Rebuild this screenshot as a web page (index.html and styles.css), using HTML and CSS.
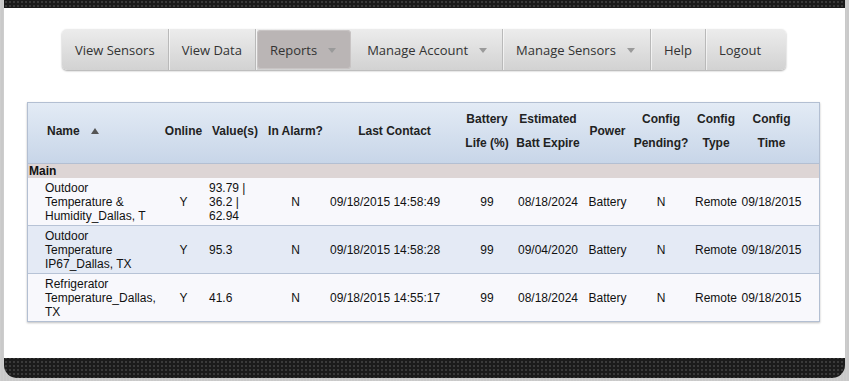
FILE: index.html
```html
<!DOCTYPE html>
<html lang="en">
<head>
    <meta charset="UTF-8">
    <title>Sensors - Reports</title>
    <link rel="stylesheet" href="styles.css">
</head>
<body>
    <div class="frame">
        <div class="page">
            <!-- Menu principal -->
            <div class="nav-wrap">
                <ul class="nav">
                    <li>View Sensors</li>
                    <li>View Data</li>
                    <li class="active">Reports <span class="caret"></span></li>
                    <li>Manage Account <span class="caret"></span></li>
                    <li>Manage Sensors <span class="caret"></span></li>
                    <li>Help</li>
                    <li class="last">Logout</li>
                </ul>
            </div>

            <!-- Tabla de sensores -->
            <div class="grid">
                <table>
                    <colgroup>
                        <col style="width:134px">
                        <col style="width:43px">
                        <col style="width:60px">
                        <col style="width:61px">
                        <col style="width:137px">
                        <col style="width:48px">
                        <col style="width:74px">
                        <col style="width:45px">
                        <col style="width:62px">
                        <col style="width:48px">
                        <col>
                    </colgroup>
                    <thead>
                        <tr>
                            <th class="name">Name <span class="sort"></span></th>
                            <th>Online</th>
                            <th>Value(s)</th>
                            <th>In Alarm?</th>
                            <th>Last Contact</th>
                            <th>Battery<br>Life (%)</th>
                            <th>Estimated<br>Batt Expire</th>
                            <th>Power</th>
                            <th>Config<br>Pending?</th>
                            <th>Config<br>Type</th>
                            <th class="time">Config<br>Time</th>
                        </tr>
                    </thead>
                    <tbody>
                        <tr class="group">
                            <td colspan="11">Main</td>
                        </tr>
                        <tr class="odd">
                            <td class="name">Outdoor<br>Temperature &amp;<br>Humidity_Dallas, T</td>
                            <td class="c">Y</td>
                            <td class="l">93.79 |<br>36.2 |<br>62.94</td>
                            <td class="c">N</td>
                            <td class="l">09/18/2015 14:58:49</td>
                            <td class="c">99</td>
                            <td class="c">08/18/2024</td>
                            <td class="c">Battery</td>
                            <td class="c">N</td>
                            <td class="c">Remote</td>
                            <td class="time">09/18/2015</td>
                        </tr>
                        <tr class="even">
                            <td class="name">Outdoor<br>Temperature<br>IP67_Dallas, TX</td>
                            <td class="c">Y</td>
                            <td class="l">95.3</td>
                            <td class="c">N</td>
                            <td class="l">09/18/2015 14:58:28</td>
                            <td class="c">99</td>
                            <td class="c">09/04/2020</td>
                            <td class="c">Battery</td>
                            <td class="c">N</td>
                            <td class="c">Remote</td>
                            <td class="time">09/18/2015</td>
                        </tr>
                        <tr class="odd last-row">
                            <td class="name">Refrigerator<br>Temperature_Dallas,<br>TX</td>
                            <td class="c">Y</td>
                            <td class="l">41.6</td>
                            <td class="c">N</td>
                            <td class="l">09/18/2015 14:55:17</td>
                            <td class="c">99</td>
                            <td class="c">08/18/2024</td>
                            <td class="c">Battery</td>
                            <td class="c">N</td>
                            <td class="c">Remote</td>
                            <td class="time">09/18/2015</td>
                        </tr>
                    </tbody>
                </table>
            </div>
        </div>
    </div>
</body>
</html>
```

FILE: styles.css
```css
/* Estilos generales */
html, body {
    margin: 0;
    padding: 0;
}
body {
    background-color: #c9c9c9;
    background-image: repeating-linear-gradient(90deg, rgba(255,255,255,0.08) 0 1px, transparent 1px 3px);
    height: 381px;
    overflow: hidden;
}
.frame {
    margin: 0 4px;
    padding: 8px 0 20px 0;
    background-color: #1b1b1b;
    background-image: radial-gradient(circle, #3a3a3a 0.9px, transparent 1.3px);
    background-size: 4px 4px;
    border-radius: 0 0 13px 13px;
}
.page {
    background-color: #ffffff;
    height: 350px;
    padding-top: 21px;
    box-sizing: border-box;
}

/* Menu */
.nav-wrap {
    text-align: center;
}
.nav {
    display: inline-flex;
    list-style: none;
    margin: 0 0 0 -1px;
    padding: 0 12px 0 0;
    height: 41px;
    border-radius: 5px;
    background: linear-gradient(#ececec, #d2d2d2);
    box-shadow: 0 1px 2px rgba(0, 0, 0, 0.35);
    font-family: "Open Sans", sans-serif;
    font-size: 13px;
    color: #333333;
}
.nav li {
    display: flex;
    align-items: center;
    padding: 0 13px;
    border-right: 1px solid #b9b9b9;
    box-shadow: 1px 0 0 rgba(255, 255, 255, 0.6);
}
.nav li.last {
    border-right: none;
    box-shadow: none;
}
.nav li.active {
    background: #bab5b5;
    border-radius: 4px;
    margin: 1px 3px 1px 1px;
    box-shadow: inset 0 0 0 1px #c8c4c4;
    border-right: none;
}
.caret {
    display: inline-block;
    width: 0;
    height: 0;
    margin: 1px 2px 0 11px;
    border-left: 4px solid transparent;
    border-right: 4px solid transparent;
    border-top: 5px solid #9a9a9a;
}

/* Tabla */
.grid {
    margin: 32px 25px 0 23px;
    border: 1px solid #b3bfd2;
    box-shadow: 0 1px 2px rgba(0, 0, 0, 0.25);
}
table {
    width: 100%;
    border-collapse: collapse;
    table-layout: fixed;
    font-family: "Liberation Sans", Arial, sans-serif;
    font-size: 12px;
    color: #111111;
}
thead tr {
    background: linear-gradient(#e3ebf5, #c7d5e8);
}
th {
    font-weight: bold;
    color: #222222;
    line-height: 24px;
    padding: 4px 0 8px 0;
    text-align: center;
    vertical-align: middle;
    white-space: nowrap;
    border-bottom: 1px solid #b3bfd2;
}
th.name {
    text-align: left;
    padding-left: 19px;
}
th.time, td.time {
    padding-right: 16px;
}
.sort {
    display: inline-block;
    width: 0;
    height: 0;
    margin-left: 8px;
    vertical-align: 1px;
    border-left: 4px solid transparent;
    border-right: 4px solid transparent;
    border-bottom: 6px solid #555555;
}
tr.group td {
    background-color: #ddd5d5;
    font-weight: bold;
    line-height: 14px;
    padding: 0 1px;
}
td {
    line-height: 14px;
    padding: 3px 0 2px 0;
    vertical-align: middle;
    white-space: nowrap;
}
tr.odd td {
    background-color: #f8f8fc;
    height: 42px;
}
tr.last-row td {
    height: 41px;
}
tr.even td {
    background-color: #e4eaf5;
    height: 40px;
    border-top: 1px solid #b7c3d6;
    border-bottom: 1px solid #b7c3d6;
}
td.name {
    padding-left: 17px;
}
td.c, td.time {
    text-align: center;
}
td.l {
    padding-left: 4px;
}
```
